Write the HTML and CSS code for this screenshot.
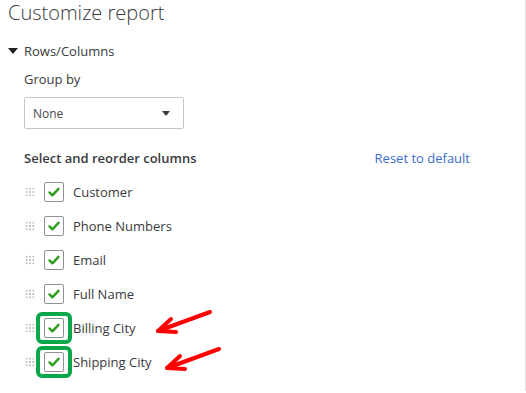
FILE: index.html
```html
<!DOCTYPE html>
<html>
<head>
<meta charset="utf-8">
<link rel="stylesheet" href="styles.css">
</head>
<body>
<div class="panel">
  <h1 class="title">Customize report</h1>
  <div class="section-head"><span class="caret"></span>Rows/Columns</div>
  <div class="section-body">
    <div class="label">Group by</div>
    <div class="select"><span>None</span><span class="sel-caret"></span></div>
    <div class="cols-head">
      <span class="cols-title">Select and reorder columns</span>
      <a class="reset">Reset to default</a>
    </div>
    <ul class="cols">
      <li class="col"><span class="grip"></span><span class="cbwrap"><span class="cb"><svg viewBox="0 0 20 20"><path d="M5 10.5l3.2 3.2L15 6.5" /></svg></span></span><span class="name">Customer</span></li>
      <li class="col"><span class="grip"></span><span class="cbwrap"><span class="cb"><svg viewBox="0 0 20 20"><path d="M5 10.5l3.2 3.2L15 6.5" /></svg></span></span><span class="name">Phone Numbers</span></li>
      <li class="col"><span class="grip"></span><span class="cbwrap"><span class="cb"><svg viewBox="0 0 20 20"><path d="M5 10.5l3.2 3.2L15 6.5" /></svg></span></span><span class="name">Email</span></li>
      <li class="col"><span class="grip"></span><span class="cbwrap"><span class="cb"><svg viewBox="0 0 20 20"><path d="M5 10.5l3.2 3.2L15 6.5" /></svg></span></span><span class="name">Full Name</span></li>
      <li class="col"><span class="grip"></span><span class="cbwrap hl"><span class="cb"><svg viewBox="0 0 20 20"><path d="M5 10.5l3.2 3.2L15 6.5" /></svg></span></span><span class="name">Billing City</span>
        <svg class="arrow a1" viewBox="0 0 70 30"><path d="M56 3L4 22" /><path d="M17 10L4 22L22 23" /></svg></li>
      <li class="col"><span class="grip"></span><span class="cbwrap hl"><span class="cb"><svg viewBox="0 0 20 20"><path d="M5 10.5l3.2 3.2L15 6.5" /></svg></span></span><span class="name">Shipping City</span>
        <svg class="arrow a2" viewBox="0 0 70 30"><path d="M56 3L4 22" /><path d="M17 10L4 22L22 23" /></svg></li>
    </ul>
  </div>
</div>
</body>
</html>
```
FILE: styles.css
```css
html, body { margin: 0; padding: 0; background: #fff; }
body {
  font-family: "Open Sans", "Liberation Sans", sans-serif;
  color: #393a3d;
  width: 526px;
  height: 393px;
  overflow: hidden;
}
.panel {
  box-sizing: border-box;
  width: 526px;
  height: 391px;
  border-right: 1px solid #e3e3e3;
  padding: 0 0 0 8px;
}
.title {
  margin: 0;
  font-weight: 300;
  font-size: 20px;
  line-height: 26px;
  color: #393a3d;
}
.section-head {
  margin-top: 15px;
  display: flex;
  align-items: center;
  font-size: 13px;
  line-height: 20px;
}
.caret {
  width: 0; height: 0;
  border-left: 5px solid transparent;
  border-right: 5px solid transparent;
  border-top: 6px solid #222;
  margin-right: 6px;
  margin-left: 0;
}
.section-body { padding-left: 16px; }
.label { font-size: 13px; line-height: 20px; margin-top: 8px; }
.select {
  box-sizing: border-box;
  margin-top: 8px;
  width: 160px;
  height: 32px;
  border: 1px solid #c4c5c7;
  border-radius: 2px;
  display: flex;
  align-items: center;
  justify-content: space-between;
  padding: 0 13px 0 8px;
  font-size: 12px;
  color: #4a4b4f;
}
.sel-caret {
  width: 0; height: 0;
  border-left: 4px solid transparent;
  border-right: 4px solid transparent;
  border-top: 5px solid #393a3d;
}
.cols-head {
  display: flex;
  justify-content: space-between;
  width: 446px;
  margin-top: 19px;
  font-size: 13px;
  line-height: 20px;
}
.cols-title { font-weight: 600; }
.reset { color: #3a6bc9; }
.cols { list-style: none; margin: 7px 0 0; padding: 0; }
.col {
  position: relative;
  display: flex;
  align-items: center;
  height: 34px;
  font-size: 13px;
}
.grip {
  width: 10px; height: 10px;
  background-image: radial-gradient(circle, #b8b9bb 0.9px, transparent 1.1px);
  background-size: 3.33px 3.33px;
  margin-left: 1px;
  margin-right: 9px;
}
.cbwrap {
  box-sizing: border-box;
  width: 36px; height: 32px;
  display: flex; align-items: center; justify-content: center;
  margin-left: -8px;
  margin-right: 0;
  border: 4px solid transparent;
  border-radius: 6px;
}
.cbwrap.hl { border-color: #08a84a; }
.cb {
  box-sizing: border-box;
  width: 20px; height: 20px;
  border: 1px solid #8d9096;
  border-radius: 2px;
  display: flex; align-items: center; justify-content: center;
  background: #fff;
}
.cb svg { width: 18px; height: 18px; }
.cb path { fill: none; stroke: #2ca01c; stroke-width: 2.7; stroke-linecap: round; stroke-linejoin: round; }
.name { margin-left: 1px; }
.arrow {
  position: absolute;
  width: 70px; height: 30px;
  overflow: visible;
}
.arrow path { fill: none; stroke: #f00; stroke-width: 4; stroke-linecap: round; stroke-linejoin: round; }
.a1 { left: 130px; top: -2px; }
.a2 { left: 139px; top: 1px; }
```
